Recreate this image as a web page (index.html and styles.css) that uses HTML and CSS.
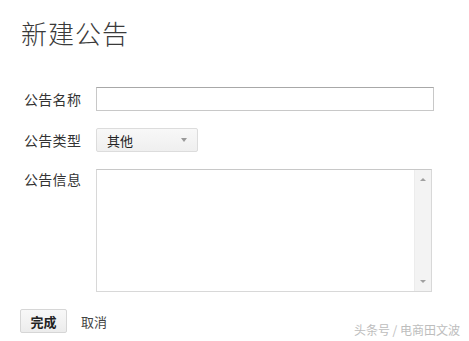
FILE: index.html
```html
<!DOCTYPE html>
<html>
<head>
<meta charset="utf-8">
<link rel="stylesheet" href="styles.css">
</head>
<body>
<div class="page">
  <h1 class="title">新建公告</h1>
  <div class="form">
    <div class="row">
      <label class="label">公告名称</label>
      <div class="input"></div>
    </div>
    <div class="row">
      <label class="label">公告类型</label>
      <div class="select"><span>其他</span><span class="caret"></span></div>
    </div>
    <div class="row row-top">
      <label class="label label-top">公告信息</label>
      <div class="textarea">
        <div class="scrollbar">
          <span class="arrow-up"></span>
          <span class="arrow-down"></span>
        </div>
      </div>
    </div>
    <div class="actions">
      <button class="btn">完成</button>
      <span class="cancel">取消</span>
    </div>
  </div>
  <div class="watermark">头条号 / 电商田文波</div>
</div>
</body>
</html>
```
FILE: styles.css
```css
* { box-sizing: border-box; }
html, body { margin: 0; padding: 0; background: #fff; }
body {
  font-family: "Noto Sans CJK SC", "Liberation Sans", sans-serif;
  color: #333;
  width: 469px;
  height: 341px;
  overflow: hidden;
}
.page {
  position: relative;
  height: 341px;
  padding: 17px 0 0 0;
}
.title {
  margin: 0 0 0 21px;
  font-size: 26px;
  font-weight: 300;
  line-height: 32px;
  color: #3a3a3a;
  letter-spacing: 1px;
}
.form {
  margin-top: 38px;
  display: flex;
  flex-direction: column;
  gap: 17px;
}
.row {
  display: flex;
  align-items: center;
}
.row-top { align-items: flex-start; }
.label {
  width: 96px;
  padding-left: 24px;
  font-size: 14px;
  letter-spacing: 0.3px;
  line-height: 20px;
  color: #333;
}
.label-top { padding-top: 0; }
.input {
  width: 338px;
  height: 24px;
  border: 1px solid #c8c8c8;
  border-top-color: #a8a8a8;
  background: #fff;
}
.select {
  width: 102px;
  height: 24px;
  border: 1px solid #dcdcdc;
  border-radius: 2px;
  background: linear-gradient(#f8f8f8, #efefef);
  display: flex;
  align-items: center;
  justify-content: space-between;
  padding: 0 10px 0 10px;
  font-size: 13px;
  color: #222;
}
.caret {
  width: 0; height: 0;
  border-left: 3px solid transparent;
  border-right: 3px solid transparent;
  border-top: 4px solid #999;
}
.textarea {
  position: relative;
  width: 336px;
  height: 123px;
  border: 1px solid #d8d8d8;
  border-top-color: #c8c8c8;
  background: #fff;
}
.scrollbar {
  position: absolute;
  top: 0; right: 0; bottom: 0;
  width: 17px;
  background: #f3f3f3;
  border-left: 1px solid #ececec;
}
.arrow-up, .arrow-down {
  position: absolute;
  left: 5px;
  width: 0; height: 0;
  border-left: 3px solid transparent;
  border-right: 3px solid transparent;
}
.arrow-up { top: 8px; border-bottom: 3px solid #a0a0a0; }
.arrow-down { bottom: 8px; border-top: 3px solid #a0a0a0; }
.actions {
  display: flex;
  align-items: center;
  gap: 14px;
  padding-left: 20px;
}
.btn {
  width: 47px;
  height: 24px;
  border: 1px solid #d6d6d6;
  border-radius: 2px;
  background: linear-gradient(#f8f8f8, #ececec);
  font-family: "Noto Sans CJK SC", sans-serif;
  font-size: 13px;
  font-weight: 700;
  color: #222;
  padding: 0;
}
.cancel {
  font-size: 13px;
  color: #444;
}
.watermark {
  position: absolute;
  right: 9px;
  bottom: 3px;
  font-size: 12px;
  color: #bdbdbd;
}
```
